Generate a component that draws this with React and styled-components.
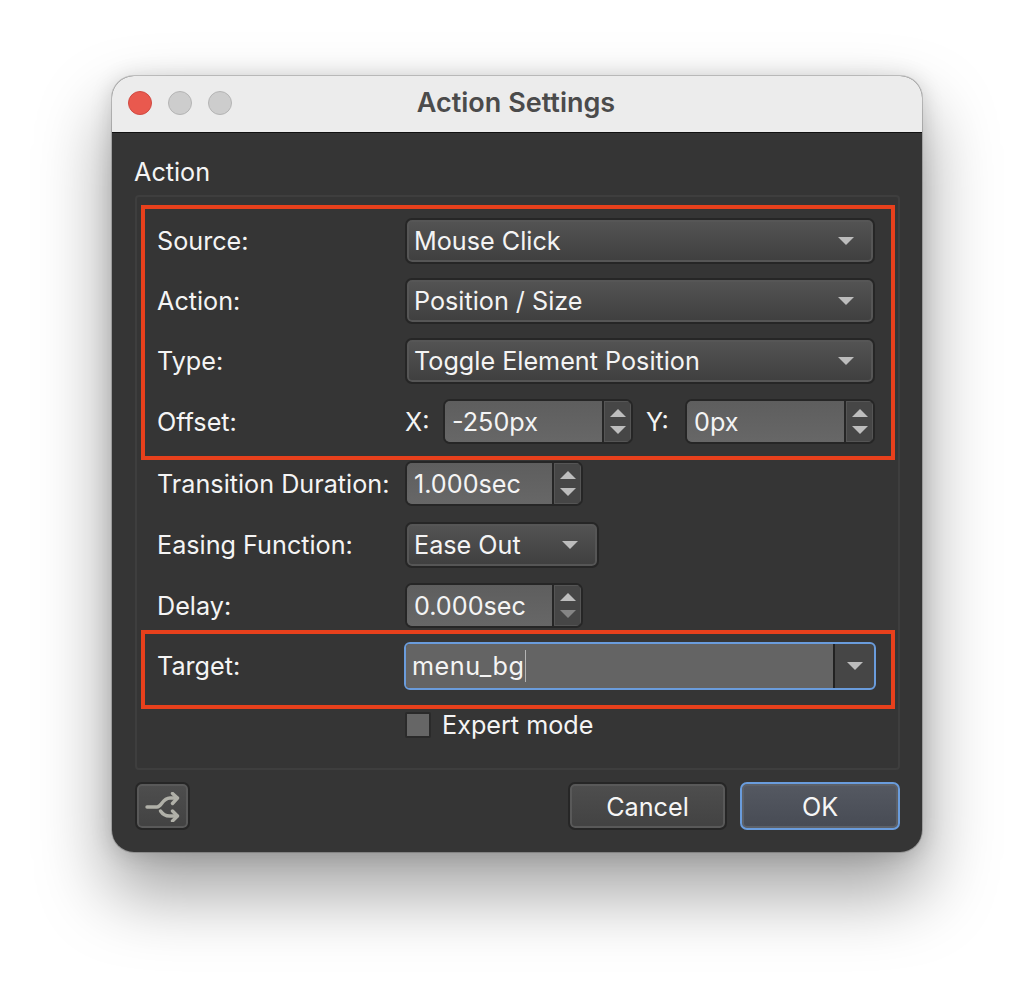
import React from 'react';
import styled, { createGlobalStyle } from 'styled-components';

const Global = createGlobalStyle`
  html, body { margin: 0; background: #fff; }
  body { font-family: Inter, "Noto Sans", "Liberation Sans", sans-serif; }
`;

const Page = styled.div`
  width: 1034px;
  height: 1000px;
  overflow: hidden;
  display: flex;
  justify-content: center;
  padding-top: 76px;
  box-sizing: border-box;
`;
const Dialog = styled.div`
  width: 810px;
  height: 776px;
  box-sizing: border-box;
  border-radius: 22px;
  background: #353535;
  box-shadow: 0 0 0 1px rgba(0,0,0,.18), 0 38px 70px 4px rgba(0,0,0,.36), 0 2px 22px rgba(0,0,0,.16);
  display: flex;
  flex-direction: column;
  overflow: hidden;
`;
const TitleBar = styled.div`
  height: 57px;
  flex: none;
  box-sizing: border-box;
  background: #ececec;
  border-bottom: 1px solid #111;
  display: flex;
  align-items: center;
  position: relative;
  padding: 0 0 2px 16px;
  gap: 16px;
`;
const Light = styled.span`
  width: 24px;
  height: 24px;
  border-radius: 50%;
  box-sizing: border-box;
  background: ${p => (p.$red ? '#e9594e' : '#cdcdcd')};
  border: 1px solid ${p => (p.$red ? '#d04a42' : '#b4b4b4')};
`;
const Title = styled.div`
  position: absolute;
  left: 0;
  right: 2px;
  top: 11px;
  text-align: center;
  font-size: 27px;
  line-height: 32px;
  font-weight: 600;
  color: #4b4b4b;
`;
const Body = styled.div`
  flex: 1;
  padding: 24px 22px 0 23px;
  display: flex;
  flex-direction: column;
  color: #f4f4f4;
  font-size: 25.2px;
`;
const GroupTitle = styled.div`
  line-height: 30px;
  height: 30px;
  margin: 0 0 8px -1px;
`;
const Group = styled.div`
  height: 575px;
  box-sizing: border-box;
  border: 2px solid #3e3e3e;
  border-radius: 4px;
  padding: 8px 3px 0 4px;
`;
const Mark = styled.div`
  border: 4px solid #e8401c;
  padding: ${p => p.$pad};
  margin-top: ${p => p.$before || 0};
  display: flex;
  flex-direction: column;
  gap: 14px;
`;
const Row = styled.div`
  display: grid;
  grid-template-columns: 248px 1fr;
  align-items: center;
  height: ${p => p.$h || 46}px;
  margin: ${p => p.$m || 0};
  padding-left: ${p => (p.$plain ? 16 : 0)}px;
`;
const Label = styled.div`
  line-height: 30px;
  white-space: nowrap;
`;
const Select = styled.div`
  box-sizing: border-box;
  height: 46px;
  width: ${p => p.$w}px;
  border: 2px solid #262626;
  border-radius: 7px;
  box-shadow: inset 0 0 0 2px #565656;
  background: linear-gradient(#545454, #3f3f3f);
  padding: 0 19px 0 7px;
  display: flex;
  align-items: center;
  justify-content: space-between;
`;
const Caret = styled.span`
  width: 0;
  height: 0;
  border-left: 8px solid transparent;
  border-right: 8px solid transparent;
  border-top: 8px solid #bcbcbc;
`;
const Spin = styled.div`
  box-sizing: border-box;
  height: 45px;
  width: ${p => p.$w}px;
  display: flex;
  border: 2px solid #262626;
  border-radius: 7px;
  overflow: hidden;
  background: #464646;
`;
const SpinValue = styled.div`
  flex: 1;
  min-width: 0;
  background: linear-gradient(#5e5e5e, #676767);
  padding-left: 7px;
  line-height: 43px;
  border-right: 2px solid #262626;
`;
const SpinArrows = styled.div`
  width: 27px;
  flex: none;
  display: flex;
  flex-direction: column;
  align-items: center;
  justify-content: center;
  gap: 9px;
  box-shadow: inset 0 0 0 1px #555;
`;
const ArrowUp = styled.span`
  border-left: 8px solid transparent;
  border-right: 8px solid transparent;
  border-bottom: 8px solid #bdbdbd;
`;
const ArrowDown = styled.span`
  border-left: 8px solid transparent;
  border-right: 8px solid transparent;
  border-top: 8px solid ${p => (p.$dim ? '#858585' : '#bdbdbd')};
`;
const OffsetRow = styled.div`
  display: flex;
  align-items: center;
`;
const AxisLabel = styled.div`
  width: ${p => p.$w}px;
  padding-left: ${p => p.$pad || 0}px;
  box-sizing: border-box;
  flex: none;
`;
const Combo = styled.div`
  box-sizing: border-box;
  width: 472px;
  height: 48px;
  margin-left: -1px;
  display: flex;
  border: 2px solid #6a9cdc;
  border-radius: 6px;
  overflow: hidden;
  background: #464646;
`;
const ComboValue = styled.div`
  flex: 1;
  background: #646464;
  padding-left: 6px;
  line-height: 44px;
  letter-spacing: 0.5px;
  border-right: 2px solid #222;
  display: flex;
  align-items: center;
`;
const TextCaret = styled.span`
  display: inline-block;
  width: 1px;
  height: 32px;
  margin-left: 1px;
  background: #b4b4b4;
`;
const ComboArrow = styled.div`
  width: 39px;
  flex: none;
  display: flex;
  align-items: center;
  justify-content: center;
`;
const CheckRow = styled.div`
  display: flex;
  align-items: center;
  gap: 11px;
  margin: 3px 0 0 264px;
  height: 26px;
`;
const Check = styled.span`
  width: 26px;
  height: 26px;
  box-sizing: border-box;
  border: 2px solid #2a2a2a;
  background: #666;
  border-radius: 2px;
`;
const Footer = styled.div`
  display: flex;
  align-items: center;
  margin-top: 12px;
  height: 48px;
`;
const Button = styled.button`
  box-sizing: border-box;
  height: 48px;
  width: ${p => p.$w}px;
  margin-left: ${p => p.$ml || 0};
  padding: 2px 0 0;
  border: 2px solid ${p => (p.$primary ? '#6a9cdc' : '#262626')};
  border-radius: 7px;
  box-shadow: inset 0 0 0 2px ${p => (p.$primary ? '#5d6168' : '#595959')};
  background: ${p => (p.$primary ? 'linear-gradient(#555962, #474b54)' : 'linear-gradient(#4e4e4e, #424242)')};
  color: #f6f6f6;
  font: inherit;
  display: flex;
  align-items: center;
  justify-content: center;
`;
const Spacer = styled.div`
  flex: 1;
`;

const Spinner = ({ w, value, dim }) => (
  <Spin $w={w}>
    <SpinValue>{value}</SpinValue>
    <SpinArrows><ArrowUp /><ArrowDown $dim={dim} /></SpinArrows>
  </Spin>
);

export default function App() {
  return (
    <Page>
      <Global />
      <Dialog>
        <TitleBar>
          <Light $red /><Light /><Light />
          <Title>Action Settings</Title>
        </TitleBar>
        <Body>
          <GroupTitle>Action</GroupTitle>
          <Group>
            <Mark $pad="9px 16px 12px 12px">
              <Row>
                <Label>Source:</Label>
                <Select $w={470}>Mouse Click<Caret /></Select>
              </Row>
              <Row>
                <Label>Action:</Label>
                <Select $w={470}>Position / Size<Caret /></Select>
              </Row>
              <Row>
                <Label>Type:</Label>
                <Select $w={470}>Toggle Element Position<Caret /></Select>
              </Row>
              <Row $h={45} $m="1px 0 0">
                <Label>Offset:</Label>
                <OffsetRow>
                  <AxisLabel $w={38}>X:</AxisLabel>
                  <Spinner w={190} value="-250px" />
                  <AxisLabel $w={52} $pad={13}>Y:</AxisLabel>
                  <Spinner w={190} value="0px" />
                </OffsetRow>
              </Row>
            </Mark>
            <Row $plain $h={45} $m="1px 0 16px">
              <Label>Transition Duration:</Label>
              <Spinner w={178} value="1.000sec" />
            </Row>
            <Row $plain $m="0 0 15px">
              <Label>Easing Function:</Label>
              <Select $w={194}>Ease Out<Caret /></Select>
            </Row>
            <Row $plain $h={45}>
              <Label>Delay:</Label>
              <Spinner w={178} value="0.000sec" dim />
            </Row>
            <Mark $pad="8px 16px 15px 12px" $before="2px">
              <Row $h={48}>
                <Label>Target:</Label>
                <Combo>
                  <ComboValue>menu_bg<TextCaret /></ComboValue>
                  <ComboArrow><Caret /></ComboArrow>
                </Combo>
              </Row>
            </Mark>
            <CheckRow><Check />Expert mode</CheckRow>
          </Group>
          <Footer>
            <Button $w={55} aria-label="Action flow">
              <svg width="38" height="30" viewBox="0 0 38 30" fill="none" stroke="#b0b0a8" strokeWidth="3.400" strokeLinecap="round" strokeLinejoin="round">
                <path d="M3 15h10c5 0 5-9 13-9h7" />
                <path d="M28.500 1.500l5 4.500-5 5.500" />
                <path d="M16.500 19c2 3 5 5 9 5h7.500" />
                <path d="M28.500 19l5 5-5 5" />
              </svg>
            </Button>
            <Spacer />
            <Button $w={159}>Cancel</Button>
            <Button $w={160} $ml="13px" $primary>OK</Button>
          </Footer>
        </Body>
      </Dialog>
    </Page>
  );
}
